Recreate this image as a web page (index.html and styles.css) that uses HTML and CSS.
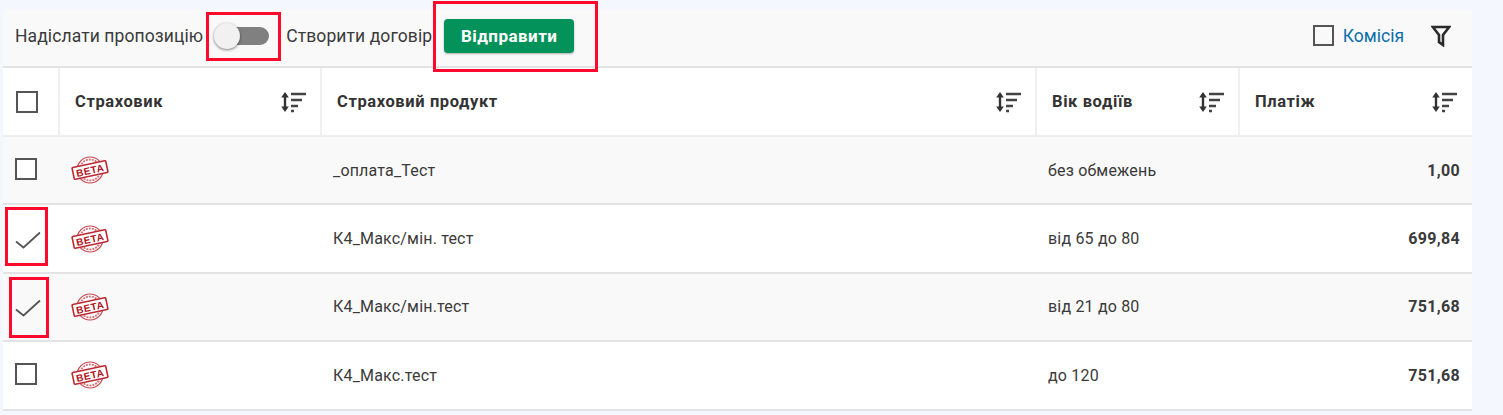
FILE: index.html
```html
<!DOCTYPE html>
<html lang="uk">
<head>
<meta charset="utf-8">
<title>Пропозиції</title>
<link rel="stylesheet" href="styles.css">
</head>
<body>
<svg class="defs" width="0" height="0" aria-hidden="true">
  <defs>
    <symbol id="sort" viewBox="1 0 25 22">
      <path d="M5 3v16" fill="none" stroke="#333" stroke-width="2.400"/>
      <path d="M1.200 6.500 5 1 8.800 6.500zM1.200 15.500 5 21 8.800 15.500z" fill="#333"/>
      <path d="M11 3h15M11 9h11M11 15h7M11 20h3" fill="none" stroke="#444" stroke-width="2.400"/>
    </symbol>
    <symbol id="beta" viewBox="0 0 38 28">
      <circle cx="19" cy="14" r="13" fill="#fff" stroke="#c9474f" stroke-width="1.200"/>
      <circle cx="19" cy="14" r="10.500" fill="none" stroke="#d4767c" stroke-width="1.800" stroke-dasharray="2 1"/>
      <g transform="rotate(-12 19 14)">
        <rect x="1.800" y="8" width="34.400" height="12" rx="1" fill="#fff" stroke="#bd2a36" stroke-width="1.600"/>
        <text x="19" y="18" class="beta-text" text-anchor="middle">BETA</text>
      </g>
    </symbol>
  </defs>
</svg>

<main class="card">
  <div class="toolbar">
    <span class="tb-label">Надіслати пропозицію</span>
    <span class="toggle"><span class="toggle-knob"></span></span>
    <span class="tb-label tb-second">Створити договір</span>
    <button class="send" type="button">Відправити</button>
    <div class="tb-right">
      <span class="box box-small"></span>
      <a class="commission" href="#">Комісія</a>
      <svg class="filter" viewBox="0 0 20 22" width="20" height="22">
        <path d="M1.800 2h16.400l-6.200 8v10l-4-3V10z" fill="none" stroke="#2b2b2b" stroke-width="2.600"/>
      </svg>
    </div>
  </div>

  <div class="row head">
    <div class="cell c-check"><span class="box"></span></div>
    <div class="cell c-ins">Страховик<svg class="sort"><use href="#sort"/></svg></div>
    <div class="cell c-prod">Страховий продукт<svg class="sort"><use href="#sort"/></svg></div>
    <div class="cell c-age">Вік водіїв<svg class="sort"><use href="#sort"/></svg></div>
    <div class="cell c-pay">Платіж<svg class="sort"><use href="#sort"/></svg></div>
  </div>

  <div class="row body alt">
    <div class="c-check"><span class="box"></span></div>
    <div class="c-ins"><svg class="stamp"><use href="#beta"/></svg></div>
    <div class="c-prod">_оплата_Тест</div>
    <div class="c-age">без обмежень</div>
    <div class="c-pay">1,00</div>
  </div>
  <div class="row body">
    <div class="c-check"><svg class="tick" viewBox="0 0 26 18"><path d="M1 10.500 8.500 16.500 25 1.500" fill="none" stroke="#555" stroke-width="1.800"/></svg></div>
    <div class="c-ins"><svg class="stamp"><use href="#beta"/></svg></div>
    <div class="c-prod">К4_Макс/мін. тест</div>
    <div class="c-age">від 65 до 80</div>
    <div class="c-pay">699,84</div>
  </div>
  <div class="row body alt">
    <div class="c-check"><svg class="tick" viewBox="0 0 26 18"><path d="M1 10.500 8.500 16.500 25 1.500" fill="none" stroke="#555" stroke-width="1.800"/></svg></div>
    <div class="c-ins"><svg class="stamp"><use href="#beta"/></svg></div>
    <div class="c-prod">К4_Макс/мін.тест</div>
    <div class="c-age">від 21 до 80</div>
    <div class="c-pay">751,68</div>
  </div>
  <div class="row body">
    <div class="c-check"><span class="box"></span></div>
    <div class="c-ins"><svg class="stamp"><use href="#beta"/></svg></div>
    <div class="c-prod">К4_Макс.тест</div>
    <div class="c-age">до 120</div>
    <div class="c-pay">751,68</div>
  </div>
</main>

<div class="mark mark-toggle"></div>
<div class="mark mark-send"></div>
<div class="mark mark-tick1"></div>
<div class="mark mark-tick2"></div>
</body>
</html>
```
FILE: styles.css
```css
* { box-sizing: border-box; }
html, body { margin: 0; height: 100%; }
body {
  background: #f4f7fd;
  font-family: Roboto, "Liberation Sans", sans-serif;
  color: #333;
  font-size: 16px;
  padding: 9px 31px 0 3px;
  overflow: hidden;
  position: relative;
}
.defs { position: absolute; }
.card {
  background: #fff;
  border-radius: 6px 6px 0 0;
}
.toolbar {
  height: 59px;
  background: #f9f9f9;
  border-bottom: 2px solid #e3e3e3;
  display: flex;
  align-items: center;
  padding: 0 21px 4px 12px;
  border-radius: 6px 6px 0 0;
}
.tb-label { font-size: 17.500px; letter-spacing: .1px; color: #3a3a3a; white-space: nowrap; }
.toggle {
  width: 49px;
  height: 18px;
  margin-left: 17px;
  background: #808080;
  border-radius: 9px;
  position: relative;
  flex: none;
}
.toggle-knob {
  position: absolute;
  left: -6px;
  top: -4px;
  width: 26px;
  height: 26px;
  border-radius: 50%;
  background: #f1f1f1;
  box-shadow: 0 1px 3px rgba(0,0,0,.5);
}
.tb-second { margin-left: 17px; }
.send {
  margin-left: 12px;
  width: 130px;
  height: 34px;
  background: #03925a;
  color: #fff;
  border: 0;
  border-radius: 4px;
  font: 700 17px Roboto, sans-serif;
  letter-spacing: .45px;
  box-shadow: 0 1px 2px rgba(0,0,0,.3);
  padding: 0;
}
.tb-right {
  margin-left: auto;
  display: flex;
  align-items: center;
}
.box {
  display: block;
  width: 22px;
  height: 22px;
  border: 2px solid #555;
  background: #fff;
}
.box-small { width: 21px; height: 21px; background: transparent; }
.commission { margin-left: 9px; color: #0a6ea8; text-decoration: none; font-size: 17.500px; }
.filter { margin-left: 27px; display: block; }

.row {
  display: grid;
  grid-template-columns: 55px 262px 715px 203px 1fr;
  align-items: center;
}
.head {
  height: 69px;
  border-bottom: 2px solid #eee;
  font-weight: 700;
  font-size: 16.500px;
  letter-spacing: .6px;
  align-items: stretch;
}
.cell {
  display: flex;
  align-items: center;
  justify-content: space-between;
  padding: 0 14px 0 15px;
  border-left: 2px solid #f0f0f0;
}
.head .c-pay { padding-right: 15px; }
.head .c-check { border-left: 0; padding: 0 0 0 13px; justify-content: flex-start; }
.sort { width: 25px; height: 22px; flex: none; }
.body {
  height: 68.400px;
  border-bottom: 2px solid #e3e3e3;
  font-size: 16px;
  letter-spacing: .18px;
  color: #3a3a3a;
}
.alt { background: #f9f9f9; }
.body .c-check { padding: 0 0 2px 12px; }
.body .c-ins { padding-left: 13px; display: flex; }
.body .c-prod { padding-left: 13px; }
.body .c-age { padding-left: 13px; }
.body .c-pay { text-align: right; padding-right: 12px; font-weight: 700; letter-spacing: .3px; }
.tick { display: block; width: 26px; height: 18px; margin: 5px 0 0 0; }
.stamp { width: 38px; height: 28px; display: block; }
.beta-text {
  font: 700 10px "Liberation Sans", sans-serif;
  fill: #b3121d;
  letter-spacing: .5px;
}

.mark { position: absolute; border: 3px solid #ff0a2c; pointer-events: none; }
.mark-toggle { left: 206px; top: 12px; width: 75px; height: 49px; }
.mark-send { left: 433px; top: 1px; width: 165px; height: 71px; }
.mark-tick1 { left: 5px; top: 207px; width: 43px; height: 59px; }
.mark-tick2 { left: 9px; top: 277px; width: 40px; height: 61px; }
```
